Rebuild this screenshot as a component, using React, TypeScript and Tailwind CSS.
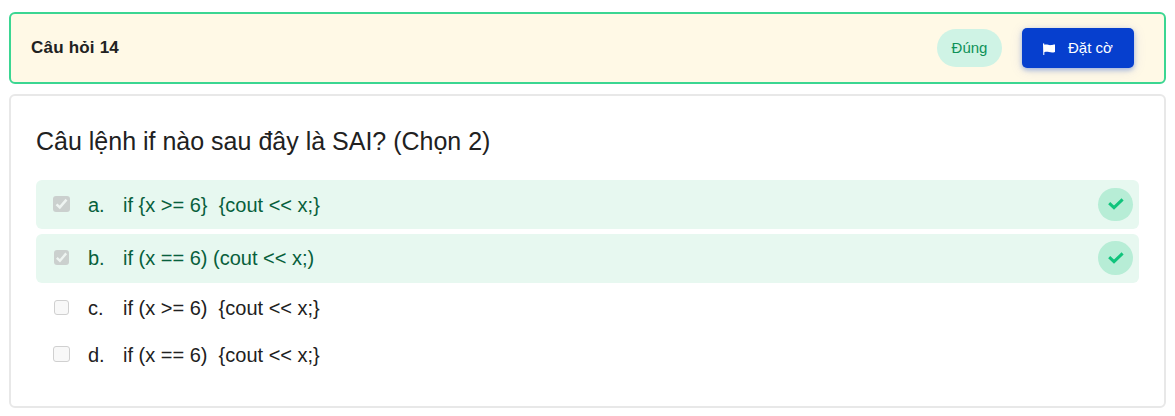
type Answer = {
  letter: string;
  code: string;
  correct: boolean;
  row: string;
  box: string;
  badge: string;
};

const answers: Answer[] = [
  { letter: "a.", code: "if {x >= 6}  {cout << x;}", correct: true, row: "h-[49px] mb-[5px]", box: "h-4 w-[17px] -ml-px mb-0.5", badge: "h-[33px] mb-px" },
  { letter: "b.", code: "if (x == 6) (cout << x;)", correct: true, row: "h-[49px] mb-0.5 pb-0.5", box: "h-[15px] w-[15px] mr-px", badge: "h-[34px]" },
  { letter: "c.", code: "if (x >= 6)  {cout << x;}", correct: false, row: "h-[47px] pb-0.5", box: "h-[15px] w-[15px] mr-px", badge: "" },
  { letter: "d.", code: "if (x == 6)  {cout << x;}", correct: false, row: "h-[47px] pb-0.5", box: "h-4 w-[17px] -ml-px mb-px", badge: "" },
];

function Checkbox({ checked, size }: { checked: boolean; size: string }) {
  return (
    <span
      role="checkbox"
      aria-checked={checked}
      aria-disabled="true"
      className={`flex shrink-0 items-center justify-center rounded-[3px] ${size} ${
        checked ? "bg-[#cbd0ce]" : "border border-[#d0d0d0] bg-[#f8f8f8]"
      }`}
    >
      {checked && (
        <svg viewBox="0 0 16 16" className="h-full w-full" fill="none" stroke="#eef4f1" strokeWidth="2.5">
          <path d="M3 8.3 6.3 11.4 13 3.6" />
        </svg>
      )}
    </span>
  );
}

function AnswerRow({ answer }: { answer: Answer }) {
  return (
    <li
      className={`flex items-center rounded-[6px] pl-[18px] pr-1.5 text-[20px] ${answer.row} ${
        answer.correct ? "bg-[#e7f8f0] text-[#08603c]" : "text-[#212121]"
      }`}
    >
      <Checkbox checked={answer.correct} size={answer.box} />
      <span className="ml-[18px] w-[35px] shrink-0">{answer.letter}</span>
      <span className="grow whitespace-pre">{answer.code}</span>
      {answer.correct && (
        <span className={`flex w-[35px] items-center justify-center rounded-full bg-[#b7edd6] ${answer.badge}`}>
          <svg viewBox="0 0 16 12" className="h-3 w-4" fill="none" stroke="#10c47c" strokeWidth="3">
            <path d="M1.2 5.2 6 9.7 14.6 1.4" />
          </svg>
        </span>
      )}
    </li>
  );
}

export default function App() {
  return (
    <main className="h-[416px] w-[1175px] bg-white pl-[9px] pr-[9px] pt-3 font-['Liberation_Sans',Arial,sans-serif] text-[#212121]">
      <header className="flex h-[72px] items-center rounded-[6px] border-2 border-[#3bd692] bg-[#fff9e6] pl-5 pr-[30px]">
        <h1 className="grow text-[17px] font-bold tracking-[0.2px]">Câu hỏi 14</h1>
        <span className="mr-5 flex h-[38px] w-[65px] items-center justify-center rounded-full bg-[#cff3e5] text-[15px] text-[#0e9158]">
          Đúng
        </span>
        <button className="flex h-10 w-28 items-center rounded-[5px] bg-[#063fce] pl-[21px] text-[15px] text-white shadow-[0_2px_5px_rgba(6,63,206,0.35),0_2px_14px_rgba(6,63,206,0.1)]">
          <svg viewBox="0 0 12 12" className="mt-0.5 mr-[13px] h-3 w-3" fill="currentColor">
            <path d="M0 .8C0 0 1.3 0 1.3.8V1.8C4 1 5.5 2.4 8 2.1 9.5 1.9 10.5 1.5 12 1.5V9C9.5 9.8 8 9.5 6 9 4.2 8.6 2.8 8.7 1.3 9.2V12H.3Z" />
          </svg>
          Đặt cờ
        </button>
      </header>

      <section className="mt-2.5 h-[314px] rounded-[6px] border-2 border-[#e8e8e8] bg-white px-[25px] pt-7">
        <h2 className="h-14 text-[25px] leading-[34px]">Câu lệnh if nào sau đây là SAI? (Chọn 2)</h2>
        <ul>
          {answers.map((answer) => (
            <AnswerRow key={answer.letter} answer={answer} />
          ))}
        </ul>
      </section>
    </main>
  );
}
